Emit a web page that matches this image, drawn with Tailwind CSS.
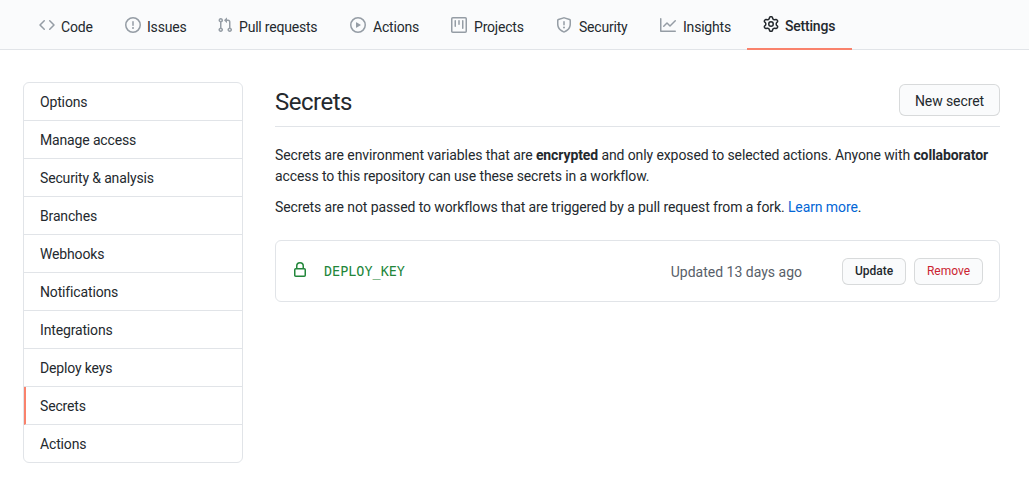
<!DOCTYPE html>
<html lang="en">
<head>
  <meta charset="UTF-8" />
  <title>Secrets</title>
  <script src="https://cdn.jsdelivr.net/npm/@tailwindcss/browser@4"></script>
</head>
<body class="bg-white text-[#24292e] text-sm tracking-[-0.1px] font-['Roboto',sans-serif] h-[480px] overflow-hidden">

<!-- Repo tabs -->
<nav class="h-[50px] bg-[#fafbfc] border-b border-[#e1e4e8] flex pl-[23px] text-[14px] tracking-[-0.2px]">
  <a class="w-[86px] h-[50px] flex items-center gap-[6px] pl-4 pt-[4px]">
    <svg class="w-4 h-4 text-[#959da5] -mt-[5px]" viewBox="0 0 16 16" fill="currentColor" fill-rule="evenodd"><path d="M4.72 3.22a.75.75 0 011.06 1.06L2.06 8l3.72 3.72a.75.75 0 11-1.06 1.06L.47 8.53a.75.75 0 010-1.06l4.25-4.25zm6.56 0a.75.75 0 10-1.06 1.06L13.94 8l-3.72 3.72a.75.75 0 101.06 1.06l4.25-4.25a.75.75 0 000-1.06l-4.25-4.25z"/></svg>
    <span>Code</span>
  </a>
  <a class="w-[92px] h-[50px] flex items-center gap-[6px] pl-4 pt-[4px]">
    <svg class="w-4 h-4 text-[#959da5] -mt-[5px]" viewBox="0 0 16 16" fill="currentColor" fill-rule="evenodd"><path d="M8 1.5a6.5 6.5 0 100 13 6.5 6.5 0 000-13zM0 8a8 8 0 1116 0A8 8 0 010 8zm9 3a1 1 0 11-2 0 1 1 0 012 0zm-.25-6.25a.75.75 0 00-1.5 0v3.5a.75.75 0 001.5 0v-3.5z"/></svg>
    <span>Issues</span>
  </a>
  <a class="w-[133px] h-[50px] flex items-center gap-[6px] pl-4 pt-[4px]">
    <svg class="w-4 h-4 text-[#959da5] -mt-[5px]" viewBox="0 0 16 16" fill="currentColor" fill-rule="evenodd"><path d="M7.177 3.073L9.573.677A.25.25 0 0110 .854v4.792a.25.25 0 01-.427.177L7.177 3.427a.25.25 0 010-.354zM3.75 2.5a.75.75 0 100 1.5.75.75 0 000-1.5zm-2.25.75a2.25 2.25 0 113 2.122v5.256a2.251 2.251 0 11-1.5 0V5.372A2.25 2.25 0 011.5 3.25zM11 2.5h-1V4h1a1 1 0 011 1v5.628a2.251 2.251 0 101.5 0V5A2.5 2.5 0 0011 2.5zm1 10.25a.75.75 0 111.5 0 .75.75 0 01-1.5 0zM3.75 12a.75.75 0 100 1.5.75.75 0 000-1.5z"/></svg>
    <span>Pull requests</span>
  </a>
  <a class="w-[101px] h-[50px] flex items-center gap-[7px] pl-4 pt-[4px]">
    <svg class="w-4 h-4 text-[#959da5] -mt-[5px]" viewBox="0 0 16 16" fill="currentColor" fill-rule="evenodd"><path d="M1.5 8a6.5 6.5 0 1113 0 6.5 6.5 0 01-13 0zM8 0a8 8 0 100 16A8 8 0 008 0zM6.379 5.227A.25.25 0 006 5.442v5.117a.25.25 0 00.379.214l4.264-2.559a.25.25 0 000-.428L6.379 5.227z"/></svg>
    <span>Actions</span>
  </a>
  <a class="w-[105px] h-[50px] flex items-center gap-[7px] pl-4 pt-[4px]">
    <svg class="w-4 h-4 text-[#959da5] -mt-[5px]" viewBox="0 0 16 16" fill="currentColor" fill-rule="evenodd"><path d="M1.75 0A1.75 1.75 0 000 1.75v12.5C0 15.216.784 16 1.75 16h12.5A1.75 1.75 0 0016 14.25V1.75A1.75 1.75 0 0014.25 0H1.75zM1.5 1.75a.25.25 0 01.25-.25h12.5a.25.25 0 01.25.25v12.5a.25.25 0 01-.25.25H1.75a.25.25 0 01-.25-.25V1.75zM11.75 3a.75.75 0 00-.75.75v7.5a.75.75 0 001.5 0v-7.5a.75.75 0 00-.75-.75zm-8.25.75a.75.75 0 011.5 0v5.5a.75.75 0 01-1.5 0v-5.5zM8 3a.75.75 0 00-.75.75v3.5a.75.75 0 001.5 0v-3.5A.75.75 0 008 3z"/></svg>
    <span>Projects</span>
  </a>
  <a class="w-[104px] h-[50px] flex items-center gap-[7px] pl-4 pt-[4px]">
    <svg class="w-4 h-4 text-[#959da5] -mt-[5px]" viewBox="0 0 16 16" fill="currentColor" fill-rule="evenodd"><path d="M7.467.133a1.75 1.75 0 011.066 0l5.25 1.68A1.75 1.75 0 0115 3.48V7c0 1.566-.32 3.182-1.303 4.682-.983 1.498-2.585 2.813-5.032 3.855a1.7 1.7 0 01-1.33 0c-2.447-1.042-4.049-2.357-5.032-3.855C1.32 10.182 1 8.566 1 7V3.48a1.75 1.75 0 011.217-1.667l5.25-1.68zm.61 1.429a.25.25 0 00-.153 0l-5.25 1.68a.25.25 0 00-.174.238V7c0 1.358.275 2.666 1.057 3.86.784 1.194 2.121 2.34 4.366 3.297a.2.2 0 00.154 0c2.245-.956 3.582-2.104 4.366-3.298C13.225 9.666 13.5 8.36 13.5 7V3.48a.25.25 0 00-.174-.237l-5.25-1.68zM9 10.5a1 1 0 11-2 0 1 1 0 012 0zm-.25-5.75a.75.75 0 10-1.5 0v3a.75.75 0 001.5 0v-3z"/></svg>
    <span>Security</span>
  </a>
  <a class="w-[103px] h-[50px] flex items-center gap-[7px] pl-4 pt-[4px]">
    <svg class="w-4 h-4 text-[#959da5] -mt-[5px]" viewBox="0 0 16 16" fill="currentColor" fill-rule="evenodd"><path d="M1.5 1.75a.75.75 0 00-1.5 0v12.5c0 .414.336.75.75.75h14.5a.75.75 0 000-1.5H1.5V1.75zm14.28 2.53a.75.75 0 00-1.06-1.06L10 7.94 7.53 5.47a.75.75 0 00-1.06 0L3.22 8.72a.75.75 0 001.06 1.06L7 7.06l2.47 2.47a.75.75 0 001.06 0l5.25-5.25z"/></svg>
    <span>Insights</span>
  </a>
  <a class="w-[105px] h-[50px] flex items-center gap-[6px] pl-4 pt-[4px] border-b-2 border-[#f9826c] font-medium">
    <svg class="w-4 h-4 text-[#24292e] -mt-[5px]" viewBox="0 0 16 16" fill="currentColor" fill-rule="evenodd"><path d="M7.429 1.525a6.593 6.593 0 011.142 0c.036.003.108.036.137.146l.289 1.105c.147.56.55.967.997 1.189.174.086.341.183.501.29.417.278.97.423 1.53.27l1.102-.303c.11-.03.175.016.195.046.219.31.41.641.573.989.014.031.022.11-.059.19l-.815.806c-.411.406-.562.957-.53 1.456a4.588 4.588 0 010 .582c-.032.499.119 1.05.53 1.456l.815.806c.08.08.073.159.059.19a6.494 6.494 0 01-.573.99c-.02.029-.086.074-.195.045l-1.103-.303c-.559-.153-1.112-.008-1.529.27-.16.107-.327.204-.5.29-.449.222-.851.628-.998 1.189l-.289 1.105c-.029.11-.101.143-.137.146a6.613 6.613 0 01-1.142 0c-.036-.003-.108-.037-.137-.146l-.289-1.105c-.147-.56-.55-.967-.997-1.189a4.502 4.502 0 01-.501-.29c-.417-.278-.97-.423-1.53-.27l-1.102.303c-.11.03-.175-.016-.195-.046a6.492 6.492 0 01-.573-.989c-.014-.031-.022-.11.059-.19l.815-.806c.411-.406.562-.957.53-1.456a4.587 4.587 0 010-.582c.032-.499-.119-1.05-.53-1.456l-.815-.806c-.08-.08-.073-.159-.059-.19a6.44 6.44 0 01.573-.99c.02-.029.086-.075.195-.045l1.103.303c.559.153 1.112.008 1.529-.27.16-.107.327-.204.5-.29.449-.222.851-.628.998-1.189l.289-1.105c.029-.11.101-.143.137-.146zM8 0c-.236 0-.47.01-.701.03-.743.065-1.29.615-1.458 1.261l-.29 1.106c-.017.066-.078.158-.211.224a5.994 5.994 0 00-.668.386c-.123.082-.233.09-.3.071L3.27 2.776c-.644-.177-1.392.02-1.82.63a7.977 7.977 0 00-.704 1.217c-.315.675-.111 1.422.363 1.891l.815.806c.05.048.098.147.088.294a6.084 6.084 0 000 .772c.01.147-.038.246-.088.294l-.815.806c-.474.469-.678 1.216-.363 1.891.2.428.436.835.704 1.218.428.609 1.176.806 1.82.63l1.103-.303c.066-.019.176-.011.299.071.213.143.436.272.668.386.133.066.194.158.212.224l.289 1.106c.169.646.715 1.196 1.458 1.26a8.094 8.094 0 001.402 0c.743-.064 1.29-.614 1.458-1.26l.29-1.106c.017-.066.078-.158.211-.224a5.98 5.98 0 00.668-.386c.123-.082.233-.09.3-.071l1.102.302c.644.177 1.392-.02 1.82-.63.268-.382.505-.789.704-1.217.315-.675.111-1.422-.364-1.891l-.814-.806c-.05-.048-.098-.147-.088-.294a6.1 6.1 0 000-.772c-.01-.147.039-.246.088-.294l.814-.806c.475-.469.679-1.216.364-1.891a7.992 7.992 0 00-.704-1.218c-.428-.609-1.176-.806-1.82-.63l-1.103.303c-.066.019-.176.011-.299-.071a5.991 5.991 0 00-.668-.386c-.133-.066-.194-.158-.212-.224L10.16 1.29C9.99.645 9.444.095 8.701.031A8.094 8.094 0 008 0zm1.5 8a1.5 1.5 0 11-3 0 1.5 1.5 0 013 0zM11 8a3 3 0 11-6 0 3 3 0 016 0z"/></svg>
    <span>Settings</span>
  </a>
</nav>

<main class="flex pl-[23px] pr-[29px] pt-[32px] gap-[32px]">
  <!-- Sidebar -->
  <ul class="w-[220px] h-[381px] shrink-0 border border-[#e1e4e8] rounded-md overflow-hidden tracking-[-0.15px]">
    <li class="h-[38px] pl-4 flex items-center border-b border-[#e1e4e8]">Options</li>
    <li class="h-[38px] pl-4 flex items-center border-b border-[#e1e4e8]">Manage access</li>
    <li class="h-[38px] pl-4 flex items-center border-b border-[#e1e4e8]">Security &amp; analysis</li>
    <li class="h-[38px] pl-4 flex items-center border-b border-[#e1e4e8]">Branches</li>
    <li class="h-[38px] pl-4 flex items-center border-b border-[#e1e4e8]">Webhooks</li>
    <li class="h-[38px] pl-4 flex items-center border-b border-[#e1e4e8]">Notifications</li>
    <li class="h-[38px] pl-4 flex items-center border-b border-[#e1e4e8]">Integrations</li>
    <li class="h-[38px] pl-4 flex items-center border-b border-[#e1e4e8]">Deploy keys</li>
    <li class="h-[38px] pl-[14px] flex items-center border-b border-[#e1e4e8] border-l-2 border-l-[#f9826c]">Secrets</li>
    <li class="h-[38px] pl-4 flex items-center">Actions</li>
  </ul>

  <!-- Content -->
  <section class="flex-1">
    <div class="h-[45px] flex items-start justify-between border-b border-[#e1e4e8]">
      <h2 class="text-[24px] leading-[40px] tracking-[-0.5px]">Secrets</h2>
      <button class="w-[101px] h-[32px] mt-[2px] pt-[2px] bg-[#fafbfc] border border-[#1b1f23]/15 rounded-md">New secret</button>
    </div>
    <p class="mt-[18px] leading-[21px]">Secrets are environment variables that are <b class="font-bold">encrypted</b> and only exposed to selected actions. Anyone with <b class="font-bold">collaborator</b> access to this repository can use these secrets in a workflow.</p>
    <p class="mt-[10px] leading-[21px]">Secrets are not passed to workflows that are triggered by a pull request from a fork. <a class="text-[#0366d6]">Learn more</a>.</p>

    <div class="mt-[22px] h-[62px] border border-[#e1e4e8] rounded-md flex items-center pl-4 pr-4">
      <svg class="w-4 h-4 text-[#22863a] -mt-[3px]" viewBox="0 0 16 16" fill="currentColor" fill-rule="evenodd"><path d="M4 4v2h-.25A1.75 1.75 0 002 7.75v5.5c0 .966.784 1.75 1.75 1.75h8.5A1.75 1.75 0 0014 13.25v-5.5A1.75 1.75 0 0012.25 6H12V4a4 4 0 10-8 0zm6.5 2V4a2.5 2.5 0 00-5 0v2h5zM12 7.5h.25a.25.25 0 01.25.25v5.5a.25.25 0 01-.25.25h-8.5a.25.25 0 01-.25-.25v-5.5a.25.25 0 01.25-.25H12z"/></svg>
      <code class="ml-4 mt-[2px] tracking-normal text-[#22863a] text-[13.45px] font-['DejaVu_Sans_Mono',monospace]">DEPLOY_KEY</code>
      <span class="ml-auto text-[#586069] mt-[2px] tracking-normal">Updated 13 days ago</span>
      <button class="ml-10 w-[64px] h-[27px] pt-[2px] bg-[#fafbfc] border border-[#1b1f23]/15 rounded-md text-[12px] font-medium tracking-normal">Update</button>
      <button class="ml-2 w-[69px] h-[27px] pt-[2px] bg-[#fafbfc] border border-[#1b1f23]/15 rounded-md text-[12px] text-[#cb2431] tracking-normal">Remove</button>
    </div>
  </section>
</main>

</body>
</html>
